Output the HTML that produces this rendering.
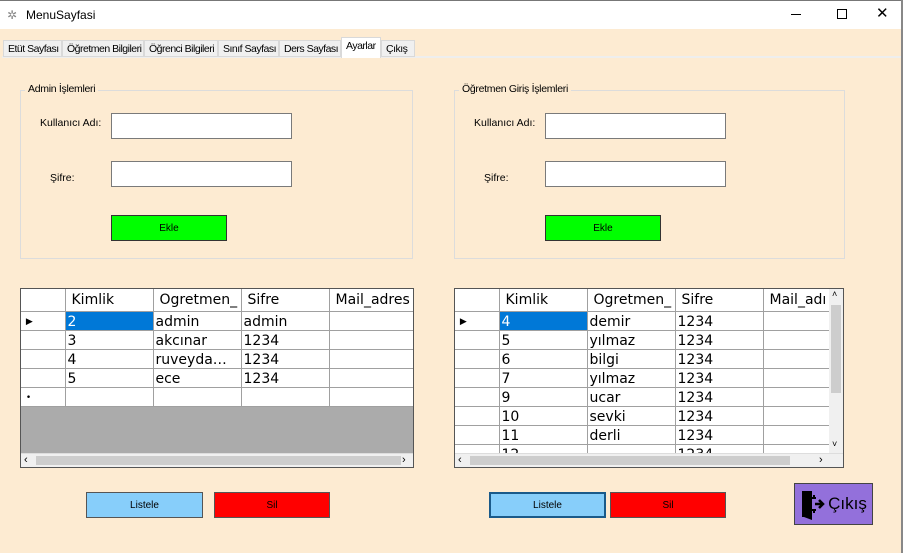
<!DOCTYPE html><html><head><meta charset="utf-8"><style>
*{box-sizing:border-box;margin:0;padding:0}
body{width:903px;height:553px;overflow:hidden;background:#fdebd2;font-family:"Liberation Sans","DejaVu Sans",sans-serif;font-size:11px;position:relative;color:#000}
.a{position:absolute}
.title{left:0;top:0;width:903px;height:29px;background:#fff;border-top:1px solid #777}
.tab{top:40px;height:17px;background:#f0f0f0;border:1px solid #d9d9d9;font-size:10.5px;letter-spacing:-0.5px;padding:2px 0 0 4px;white-space:nowrap}
.grp{border:1px solid #dcdcdc}
.gl{background:#fdebd2;padding:0 3px;font-size:10.5px;letter-spacing:-0.3px}
.tb{background:#fff;border:1px solid #7a7a7a}
.btn{display:flex;align-items:center;justify-content:center;font-size:10px}
.grid{background:#ababab;border:1px solid #555}
table{border-collapse:collapse;font-family:"DejaVu Sans",sans-serif;font-size:14px;background:#fff}
td{border:1px solid #a0a0a0;height:19px;padding:0 2px;white-space:nowrap;overflow:hidden}
td div{height:18px;line-height:17px;padding-top:2px;overflow:hidden}
tr.h td{height:22px;border-top:none;border-bottom:1px solid #a0a0a0;padding:0 0 0 6px}
tr.h td div{height:21px;padding-top:3px}
td.rh{border-left:none;font-size:9px}
.sel{background:#0078d7;color:#fff}
.hs{height:14px;background:#f0f0f0;border-top:1px solid #ddd}
</style></head><body>
<div class="a title"></div>
<div class="a" style="left:7px;top:8px;font-size:12px;color:#888">✲</div>
<div class="a" style="left:26px;top:8px;font-size:12px">MenuSayfasi</div>
<div class="a" style="left:791px;top:14px;width:10px;height:1px;background:#000"></div>
<div class="a" style="left:837px;top:9px;width:10px;height:10px;border:1px solid #000"></div>
<div class="a" style="left:876px;top:4px;font-size:15px">✕</div>
<div class="a" style="left:901px;top:0;width:2px;height:553px;background:#888"></div>
<div class="a" style="left:2px;top:56px;width:899px;height:2px;background:#eee"></div>
<div class="a tab" style="left:3px;width:59px">Etüt Sayfası</div>
<div class="a tab" style="left:62px;width:82px">Öğretmen Bilgileri</div>
<div class="a tab" style="left:144px;width:74px">Öğrenci Bilgileri</div>
<div class="a tab" style="left:218px;width:61px">Sınıf Sayfası</div>
<div class="a tab" style="left:279px;width:62px">Ders Sayfası</div>
<div class="a tab" style="left:341px;top:37px;height:21px;width:40px;background:#fff;border-bottom:none">Ayarlar</div>
<div class="a tab" style="left:381px;width:34px">Çıkış</div>

<div class="a grp" style="left:20px;top:90px;width:393px;height:169px"></div>
<div class="a gl" style="left:25px;top:83px">Admin İşlemleri</div>
<div class="a" style="left:40px;top:117px;font-size:10.5px">Kullanıcı Adı:</div>
<div class="a tb" style="left:111px;top:113px;width:181px;height:26px"></div>
<div class="a" style="left:50px;top:172px;font-size:10.5px">Şifre:</div>
<div class="a tb" style="left:111px;top:161px;width:181px;height:26px"></div>
<div class="a btn" style="left:111px;top:215px;width:116px;height:26px;background:#00ff00;border:1px solid #333">Ekle</div>

<div class="a grp" style="left:454px;top:90px;width:391px;height:169px"></div>
<div class="a gl" style="left:459px;top:83px">Öğretmen Giriş İşlemleri</div>
<div class="a" style="left:474px;top:117px;font-size:10.5px">Kullanıcı Adı:</div>
<div class="a tb" style="left:545px;top:113px;width:181px;height:26px"></div>
<div class="a" style="left:484px;top:172px;font-size:10.5px">Şifre:</div>
<div class="a tb" style="left:545px;top:161px;width:181px;height:26px"></div>
<div class="a btn" style="left:545px;top:215px;width:116px;height:26px;background:#00ff00;border:1px solid #333">Ekle</div>

<div class="a grid" style="left:20px;top:288px;width:394px;height:180px;overflow:hidden">
<table style="width:392px;table-layout:fixed">
<col style="width:44px"><col style="width:88px"><col style="width:88px"><col style="width:88px"><col style="width:84px">
<tr class="h"><td class="rh"></td><td><div>Kimlik</div></td><td><div>Ogretmen_</div></td><td><div>Sifre</div></td><td><div>Mail_adres</div></td></tr>
<tr><td class="rh"><div>&nbsp;▶</div></td><td class="sel"><div>2</div></td><td><div>admin</div></td><td><div>admin</div></td><td></td></tr>
<tr><td class="rh"></td><td><div>3</div></td><td><div>akcınar</div></td><td><div>1234</div></td><td></td></tr>
<tr><td class="rh"></td><td><div>4</div></td><td><div>ruveyda…</div></td><td><div>1234</div></td><td></td></tr>
<tr><td class="rh"></td><td><div>5</div></td><td><div>ece</div></td><td><div>1234</div></td><td></td></tr>
<tr><td class="rh"><div>&nbsp;•</div></td><td></td><td></td><td></td><td></td></tr>
</table>
<div class="a hs" style="left:0;top:164px;width:392px"><div class="a" style="left:15px;top:2px;width:365px;height:9px;background:#cdcdcd"></div><span class="a" style="left:3px;top:0">‹</span><span class="a" style="left:381px;top:0">›</span></div>
</div>

<div class="a grid" style="left:454px;top:288px;width:390px;height:180px;overflow:hidden;background:#fff">
<table style="width:374px;table-layout:fixed">
<col style="width:44px"><col style="width:88px"><col style="width:88px"><col style="width:88px"><col style="width:66px">
<tr class="h"><td class="rh"></td><td><div>Kimlik</div></td><td><div>Ogretmen_</div></td><td><div>Sifre</div></td><td><div>Mail_adı</div></td></tr>
<tr><td class="rh"><div>&nbsp;▶</div></td><td class="sel"><div>4</div></td><td><div>demir</div></td><td><div>1234</div></td><td></td></tr>
<tr><td class="rh"></td><td><div>5</div></td><td><div>yılmaz</div></td><td><div>1234</div></td><td></td></tr>
<tr><td class="rh"></td><td><div>6</div></td><td><div>bilgi</div></td><td><div>1234</div></td><td></td></tr>
<tr><td class="rh"></td><td><div>7</div></td><td><div>yılmaz</div></td><td><div>1234</div></td><td></td></tr>
<tr><td class="rh"></td><td><div>9</div></td><td><div>ucar</div></td><td><div>1234</div></td><td></td></tr>
<tr><td class="rh"></td><td><div>10</div></td><td><div>sevki</div></td><td><div>1234</div></td><td></td></tr>
<tr><td class="rh"></td><td><div>11</div></td><td><div>derli</div></td><td><div>1234</div></td><td></td></tr>
<tr><td class="rh"></td><td><div>12</div></td><td><div>...</div></td><td><div>1234</div></td><td></td></tr>
</table>
<div class="a" style="left:374px;top:0;width:14px;height:164px;background:#f0f0f0"><div class="a" style="left:2px;top:16px;width:10px;height:88px;background:#cdcdcd"></div><span class="a" style="left:3px;top:0;font-size:9px">˄</span><span class="a" style="left:3px;top:150px;font-size:9px">˅</span></div>
<div class="a hs" style="left:0;top:164px;width:388px"><div class="a" style="left:15px;top:2px;width:320px;height:9px;background:#cdcdcd"></div><span class="a" style="left:3px;top:0">‹</span><span class="a" style="left:364px;top:0">›</span></div>
</div>

<div class="a btn" style="left:86px;top:492px;width:117px;height:26px;background:#87cefa;border:1px solid #555">Listele</div>
<div class="a btn" style="left:214px;top:492px;width:116px;height:26px;background:#ff0000;border:1px solid #555">Sil</div>
<div class="a btn" style="left:489px;top:492px;width:117px;height:26px;background:#87cefa;border:2px solid #1a5a8a">Listele</div>
<div class="a btn" style="left:610px;top:492px;width:116px;height:26px;background:#ff0000;border:1px solid #555">Sil</div>
<div class="a btn" style="left:794px;top:483px;width:79px;height:42px;background:#9370db;border:1px solid #444;font-size:17px">
<svg width="26" height="32" viewBox="0 0 26 32" style="margin-right:2px"><path d="M2 3h10v26H2z" fill="#000"/><path d="M12 3l-8 3v23l8 3z" fill="#000"/><path d="M12 10h4M12 22h4M14 10v-3M14 22v3" stroke="#000" stroke-width="2"/><path d="M15 16h7M19 12l4 4-4 4" stroke="#000" stroke-width="2.5" fill="none"/></svg>Çıkış</div>
</body></html>
